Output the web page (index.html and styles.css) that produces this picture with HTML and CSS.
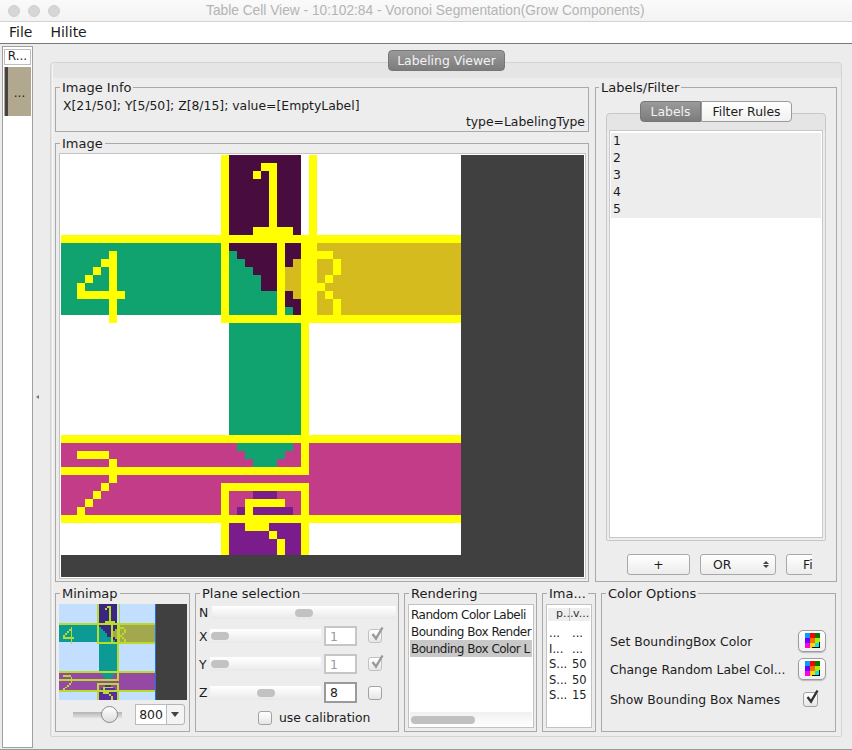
FILE: index.html
```html
<!DOCTYPE html>
<html lang="en">

<head>
  <meta charset="UTF-8">
  <title>Table Cell View</title>
  <link rel="stylesheet" href="styles.css">
</head>

<body>
  <svg class="defs" width="0" height="0">
    <symbol id="cells" viewBox="0 0 50 50" shape-rendering="crispEdges">
      <rect class="c-bg" width="50" height="50" />
      <g class="c-dark">
        <rect x="21" y="0" width="9" height="10" />
        <rect x="21" y="11" width="6" height="9" />
        <rect x="28" y="11" width="2" height="9" />
      </g>
      <g class="c-green">
        <rect x="0" y="11" width="20" height="9" />
        <rect x="21" y="21" width="9" height="14" />
        <rect x="21" y="12" width="1" height="1" />
        <rect x="21" y="13" width="2" height="1" />
        <rect x="21" y="14" width="3" height="1" />
        <rect x="21" y="15" width="4" height="2" />
        <rect x="21" y="17" width="6" height="3" />
        <rect x="28" y="19" width="1" height="1" />
      </g>
      <g class="c-gold">
        <rect x="32" y="11" width="18" height="9" />
        <rect x="29" y="13" width="1" height="1" />
        <rect x="28" y="14" width="2" height="3" />
        <rect x="29" y="17" width="1" height="1" />
      </g>
      <g class="c-pink">
        <rect x="0" y="36" width="50" height="9" />
      </g>
      <g class="c-green">
        <rect x="22" y="36" width="7" height="1" />
        <rect x="23" y="37" width="5" height="1" />
        <rect x="24" y="38" width="3" height="1" />
      </g>
      <g class="c-violet">
        <rect x="24" y="42" width="3" height="1" />
        <rect x="22" y="44" width="1" height="1" />
        <rect x="24" y="44" width="5" height="1" />
        <rect x="21" y="46" width="9" height="4" />
      </g>
      <g class="c-box">
        <rect x="0" y="10" width="50" height="1" />
        <rect x="20" y="20" width="30" height="1" />
        <rect x="0" y="35" width="50" height="1" />
        <rect x="0" y="39" width="31" height="1" />
        <rect x="20" y="41" width="11" height="1" />
        <rect x="0" y="45" width="50" height="1" />
        <rect x="20" y="0" width="1" height="21" />
        <rect x="20" y="41" width="1" height="9" />
        <rect x="30" y="10" width="1" height="30" />
        <rect x="30" y="41" width="1" height="9" />
        <rect x="31" y="0" width="1" height="21" />
        <rect x="27" y="10" width="1" height="11" />
        <!-- pixels of the region names -->
        <rect x="25" y="1" width="2" height="1" />
        <rect x="26" y="1" width="1" height="8" />
        <rect x="24" y="2" width="1" height="1" />
        <rect x="24" y="9" width="5" height="1" />
        <rect x="6" y="12" width="1" height="9" />
        <rect x="5" y="13" width="1" height="1" />
        <rect x="4" y="14" width="1" height="1" />
        <rect x="3" y="15" width="1" height="1" />
        <rect x="2" y="16" width="1" height="2" />
        <rect x="2" y="17" width="6" height="1" />
        <rect x="32" y="12" width="2" height="1" />
        <rect x="34" y="13" width="1" height="2" />
        <rect x="33" y="15" width="1" height="1" />
        <rect x="32" y="16" width="1" height="1" />
        <rect x="33" y="17" width="1" height="1" />
        <rect x="34" y="18" width="1" height="2" />
        <rect x="2" y="37" width="4" height="1" />
        <rect x="6" y="38" width="1" height="3" />
        <rect x="5" y="41" width="1" height="1" />
        <rect x="4" y="42" width="1" height="1" />
        <rect x="3" y="43" width="1" height="1" />
        <rect x="2" y="44" width="1" height="1" />
        <rect x="23" y="43" width="5" height="1" />
        <rect x="23" y="44" width="1" height="3" />
        <rect x="23" y="46" width="3" height="1" />
        <rect x="26" y="47" width="1" height="1" />
        <rect x="27" y="48" width="1" height="2" />
      </g>
    </symbol>
    <symbol id="tick" viewBox="0 0 16 16">
      <path d="M3.5 8 L7 12.5 L13.5 1.5" fill="none" stroke="currentColor" stroke-width="2.4" />
    </symbol>
    <symbol id="swatch" viewBox="0 0 15 15" shape-rendering="crispEdges">
      <rect x="0" y="0" width="5" height="5" fill="#0a9bff" />
      <rect x="5" y="0" width="5" height="5" fill="#f00" />
      <rect x="10" y="0" width="5" height="5" fill="#007a00" />
      <rect x="0" y="5" width="5" height="5" fill="#6a00ff" />
      <rect x="5" y="5" width="5" height="5" fill="#ff6a00" />
      <rect x="10" y="5" width="5" height="5" fill="#a8f000" />
      <rect x="0" y="10" width="5" height="5" fill="#ff00e0" />
      <rect x="5" y="10" width="5" height="5" fill="#ffd800" />
      <rect x="10" y="10" width="5" height="5" fill="#00e8f0" />
      <rect x="7" y="14" width="8" height="1" fill="#000" />
      <rect x="14" y="9" width="1" height="6" fill="#000" />
    </symbol>
  </svg>

  <div class="titlebar">
    <div class="lights"><i></i><i></i><i></i></div>
    <div class="title">Table Cell View - 10:102:84 - Voronoi Segmentation(Grow Components)</div>
  </div>
  <div class="menubar"><span>File</span><span>Hilite</span></div>

  <div class="main">
    <div class="side">
      <div class="side-head">R...</div>
      <div class="side-cell"><b></b><span>...</span></div>
    </div>
    <div class="splitter"><i></i></div>

    <div class="viewer">
      <div class="tabs"><div class="tab on">Labeling Viewer</div></div>
      <div class="pane">
        <div class="top-row">
          <div class="left-col">
            <fieldset class="info">
              <legend>Image Info</legend>
              <div>X[21/50]; Y[5/50]; Z[8/15]; value=[EmptyLabel]</div>
              <div class="type">type=LabelingType</div>
            </fieldset>
            <fieldset class="image">
              <legend>Image</legend>
              <div class="canvas-box">
                <div class="canvas">
                  <svg width="400" height="400"><use href="#cells" /></svg>
                </div>
              </div>
            </fieldset>
          </div>

          <fieldset class="labels">
            <legend>Labels/Filter</legend>
            <div class="tabs small">
              <div class="tab on">Labels</div>
              <div class="tab">Filter Rules</div>
            </div>
            <div class="pane inner">
              <div class="label-list">
                <div>1</div>
                <div>2</div>
                <div>3</div>
                <div>4</div>
                <div>5</div>
              </div>
            </div>
            <div class="filter-bar">
              <div class="btn add">+</div>
              <div class="btn or">OR<span class="updown"><i></i><i></i></span></div>
              <div class="btn fi">Fi</div>
            </div>
          </fieldset>
        </div>

        <div class="bottom-row">
          <fieldset class="minimap">
            <legend>Minimap</legend>
            <div class="mini-map">
              <svg width="96" height="96"><use href="#cells" /></svg>
            </div>
            <div class="zoom-row">
              <div class="zoom-slider"><i></i></div>
              <div class="combo"><span>800</span><b></b></div>
            </div>
          </fieldset>

          <fieldset class="plane">
            <legend>Plane selection</legend>
            <div class="plane-row n">
              <span class="axis">N</span>
              <div class="track"><i class="at-83"></i></div>
            </div>
            <div class="plane-row">
              <span class="axis">X</span>
              <div class="track"><i></i></div>
              <div class="field off">1</div>
              <div class="check off"><svg width="16" height="16"><use href="#tick" /></svg></div>
            </div>
            <div class="plane-row">
              <span class="axis">Y</span>
              <div class="track"><i></i></div>
              <div class="field off">1</div>
              <div class="check off"><svg width="16" height="16"><use href="#tick" /></svg></div>
            </div>
            <div class="plane-row">
              <span class="axis">Z</span>
              <div class="track"><i class="at-47"></i></div>
              <div class="field">8</div>
              <div class="check"></div>
            </div>
            <div class="calib"><div class="check"></div>use calibration</div>
          </fieldset>

          <fieldset class="rendering">
            <legend>Rendering</legend>
            <div class="render-list">
              <div class="item">Random Color Labeli</div>
              <div class="item">Bounding Box Render</div>
              <div class="item sel">Bounding Box Color L</div>
              <div class="hscroll"><i></i></div>
            </div>
          </fieldset>

          <fieldset class="meta">
            <legend>Ima...</legend>
            <div class="meta-table">
              <div class="meta-head"><span>p...</span><span>v...</span></div>
              <div class="meta-row"><span>...</span><span>...</span></div>
              <div class="meta-row"><span>I...</span><span>...</span></div>
              <div class="meta-row"><span>S...</span><span>50</span></div>
              <div class="meta-row"><span>S...</span><span>50</span></div>
              <div class="meta-row"><span>S...</span><span>15</span></div>
            </div>
          </fieldset>

          <fieldset class="colors">
            <legend>Color Options</legend>
            <div class="color-row">
              <span>Set BoundingBox Color</span>
              <div class="swatch-btn"><svg width="15" height="15"><use href="#swatch" /></svg></div>
            </div>
            <div class="color-row">
              <span>Change Random Label Col...</span>
              <div class="swatch-btn"><svg width="15" height="15"><use href="#swatch" /></svg></div>
            </div>
            <div class="color-row names">
              <span>Show Bounding Box Names</span>
              <div class="check big"><svg width="16" height="16"><use href="#tick" /></svg></div>
            </div>
          </fieldset>
        </div>
      </div>
    </div>
  </div>
</body>

</html>
```

FILE: styles.css
```css
* {
  box-sizing: border-box;
}

html,
body {
  margin: 0;
  height: 750px;
  overflow: hidden;
}

body {
  background: #ececec;
  color: #1c1c1c;
  font: 12.4px/16px "DejaVu Sans", sans-serif;
}

.defs {
  position: absolute;
}

/* window chrome */
.titlebar {
  display: flex;
  height: 22px;
  background: linear-gradient(#fafafa, #f3f3f3);
  border-bottom: 1px solid #d2d2d2;
}

.lights {
  display: flex;
  gap: 8px;
  padding: 5px 0 0 8px;
}

.lights i {
  width: 12px;
  height: 12px;
  border-radius: 50%;
  background: #d6d6d6;
  border: 1px solid #cfcfcf;
}

.title {
  margin-left: 146px;
  color: #b4b4b4;
  font: 13.75px/21px "Liberation Sans", sans-serif;
  white-space: nowrap;
}

.menubar {
  display: flex;
  gap: 18px;
  height: 22px;
  padding-left: 9px;
  background: #fff;
  border-bottom: 1px solid #787878;
  font-size: 14px;
  line-height: 21px;
}

.main {
  display: flex;
  height: 706px;
  border-bottom: 1px solid #9a9a9a;
}

.side {
  width: 31px;
  height: 702px;
  margin: 2px 0 0 2px;
  padding: 2px 1px;
  background: #fff;
  border: 1px solid #a0a0a0;
}

.side-head {
  height: 16px;
  border: 1px solid #bdbdbd;
  font-size: 12px;
  line-height: 13px;
  text-align: center;
}

.side-cell {
  display: flex;
  height: 49px;
  margin-top: 2px;
  padding-left: 1px;
  background: #b2a78f;
  font-size: 12px;
  line-height: 52px;
}

.side-cell b {
  width: 3px;
  background: #444;
}

.side-cell span {
  flex: 1;
  text-align: center;
}

.splitter {
  display: flex;
  align-items: center;
  width: 17px;
  padding: 0 0 0 3px;
}

.splitter i {
  width: 0;
  height: 0;
  margin-top: 1px;
  border: 2px solid transparent;
  border-left: 0;
  border-right: 3px solid #777;
}

.viewer {
  width: 792px;
  padding-top: 6px;
}

/* tabs */
.tabs {
  position: relative;
  z-index: 1;
  display: flex;
  justify-content: center;
  height: 21px;
  margin-bottom: -9px;
  margin-left: 1px;
}

.tab {
  width: 117px;
  height: 21px;
  background: linear-gradient(#fff, #f1f1f1);
  border: 1px solid #9b9b9b;
  border-radius: 0 4px 4px 0;
  text-align: center;
  line-height: 19px;
}

.tab.on {
  background: linear-gradient(#9a9a9a, #7c7c7c);
  border-color: #777;
  border-radius: 4px;
  color: #f2f2f2;
}

.tabs.small .tab {
  width: 91px;
}

.tabs.small .tab.on {
  width: 61px;
  border-radius: 4px 0 0 4px;
}

.tabs.small {
  margin: 7px 0 -9px;
}

.pane {
  height: 675px;
  padding: 17px 4px 0;
  background: linear-gradient(#e5e5e5 15px, #ededed 15px);
  border: 1px solid #d4d4d4;
  border-radius: 4px 4px 2px 2px;
  box-shadow: inset 1px 0 0 #e2e2e2, inset 2px 0 0 #f6f6f6;
}

.pane.inner {
  height: 428px;
  padding: 16px 2px 3px;
  background: linear-gradient(#e5e5e5 16px, #ededed 16px);
  border-color: #c8c8c8;
  box-shadow: none;
}

/* titled groups */
fieldset {
  min-width: 0;
  margin: 0;
  padding: 0 0 0 var(--pad);
  border: 1px solid #a9a9a9;
}

legend {
  height: 14px;
  margin-left: calc(4px - var(--pad));
  padding: 0 2px;
  font-size: 13px;
  line-height: 16px;
}

.top-row {
  display: flex;
  gap: 6px;
  height: 502px;
}

.left-col {
  display: flex;
  flex-direction: column;
  gap: 4px;
  width: 534px;
}

.info {
  --pad: 7px;
  height: 52px;
  padding-top: 4px;
  padding-right: 3px;
}

.type {
  text-align: right;
}

.image {
  --pad: 3px;
  height: 446px;
  padding-top: 3px;
}

.canvas-box {
  width: 527px;
  padding: 1px;
  background: #fff;
  border: 1px solid #c4c4c4;
}

.canvas {
  width: 523px;
  height: 422px;
  background: #404040;
}

.canvas svg,
.mini-map svg {
  display: block;
}

.canvas svg {
  --bg: #fff;
  --dark: #480c3e;
  --green: #10a36f;
  --gold: #d6bb1f;
  --pink: #c33c88;
  --violet: #7b1c8c;
  --box: #ff0;
}

.mini-map svg {
  --bg: #c2dfff;
  --dark: #38267f;
  --green: #0c9a94;
  --gold: #a3a84f;
  --pink: #9549a3;
  --violet: #5a2a9f;
  --box: #b9dc2c;
  box-shadow: 1px 0 0 #1e6fe0;
}

.c-bg { fill: var(--bg); }
.c-dark { fill: var(--dark); }
.c-green { fill: var(--green); }
.c-gold { fill: var(--gold); }
.c-pink { fill: var(--pink); }
.c-violet { fill: var(--violet); }
.c-box { fill: var(--box); }

.labels {
  --pad: 10px;
  width: 242px;
  padding-right: 10px;
}

.labels legend {
  margin-left: calc(3px - var(--pad));
}

.label-list {
  height: 408px;
  padding: 2px 1px;
  background: #fff;
  border: 1px solid #c8c8c8;
}

.label-list div {
  height: 17px;
  padding-left: 2px;
  background: #ededed;
}

.filter-bar {
  display: flex;
  gap: 10px;
  width: 185px;
  height: 21px;
  margin: 13px 0 0 21px;
  overflow: hidden;
}

.btn {
  display: flex;
  flex: none;
  align-items: center;
  justify-content: center;
  height: 21px;
  background: linear-gradient(#fff, #ececec);
  border: 1px solid #a8a8a8;
  border-radius: 3px;
}

.add {
  width: 63px;
}

.or {
  justify-content: space-between;
  width: 76px;
  padding: 0 6px 0 12px;
}

.updown i {
  display: block;
  width: 0;
  height: 0;
  margin: 1px 0;
  border: 3px solid transparent;
  border-top: 0;
  border-bottom: 3px solid #444;
}

.updown i + i {
  border-top: 3px solid #444;
  border-bottom: 0;
}

.fi {
  justify-content: flex-start;
  width: 60px;
  padding-left: 16px;
}

/* bottom row */
.bottom-row {
  display: flex;
  gap: 5px;
  height: 146px;
  margin-top: 4px;
}

.minimap {
  --pad: 3px;
  width: 135px;
  padding-top: 4px;
}

.mini-map {
  width: 128px;
  height: 96px;
  background: #404040;
}

.zoom-row {
  display: flex;
  align-items: center;
  height: 21px;
  margin-top: 4px;
}

.zoom-slider {
  display: flex;
  align-items: center;
  width: 49px;
  height: 17px;
  margin-left: 14px;
  background: linear-gradient(transparent 6px, #b4b4b4 6px, #e2e2e2 12px, transparent 12px);
  border-radius: 3px;
}

.zoom-slider i {
  width: 17px;
  height: 17px;
  margin-left: 28px;
  background: linear-gradient(#fff, #ddd);
  border: 1px solid #8a8a8a;
  border-radius: 50%;
}

.combo {
  display: flex;
  width: 50px;
  height: 21px;
  margin-left: 13px;
  background: #f4f4f4;
  border: 1px solid #b4b4b4;
  border-radius: 0 3px 3px 0;
}

.combo span {
  width: 32px;
  height: 21px;
  margin: -1px 0 0 -1px;
  background: #fff;
  border: 1px solid #bbb;
  text-align: center;
  line-height: 19px;
}

.combo b {
  width: 0;
  height: 0;
  margin: 7px 0 0 4px;
  border: 4px solid transparent;
  border-bottom: 0;
  border-top: 5px solid #444;
}

.plane {
  --pad: 3px;
  width: 204px;
  padding-top: 6px;
}

.plane-row {
  display: flex;
  align-items: center;
  height: 20px;
  margin-bottom: 8px;
}

.plane-row:nth-of-type(4) {
  height: 21px;
  margin-bottom: 8px;
}

.plane-row.n {
  height: 13px;
  margin-bottom: 7px;
}

.axis {
  flex: none;
  width: 11px;
  padding-top: 1px;
}

.n .axis {
  width: 13px;
}

.track {
  display: flex;
  align-items: center;
  width: 111px;
  height: 14px;
  background: linear-gradient(#fff, #f6f6f6 45%, #e8e8e8);
}

.n .track {
  width: 184px;
  height: 13px;
}

.track i {
  width: 18px;
  height: 8px;
  margin-left: 1px;
  background: #c2c2c2;
  border-radius: 4px;
}

.track i.at-83 {
  margin-left: 83px;
}

.track i.at-47 {
  margin-left: 47px;
}

.field {
  width: 33px;
  height: 100%;
  margin-left: 3px;
  padding-left: 4px;
  background: #fff;
  border: 2px solid #9a9a9a;
  line-height: 17px;
}

.field.off {
  border-color: #c6c6c6;
  color: #9a9a9a;
}

.check {
  position: relative;
  flex: none;
  width: 14px;
  height: 14px;
  margin-left: 11px;
  background: linear-gradient(#fff, #e6e6e6);
  border: 1px solid #a2a2a2;
  border-radius: 3px;
  color: #333;
}

.check svg {
  position: absolute;
  top: -4px;
  left: 0;
}

.check.off {
  border-color: #c2c2c2;
  color: #9a9a9a;
}

.calib {
  display: flex;
  align-items: center;
  gap: 7px;
  height: 14px;
  margin: 0 0 0 59px;
}

.calib .check {
  margin-left: 0;
}

.rendering {
  --pad: 3px;
  width: 133px;
  padding-top: 4px;
  padding-right: 2px;
}

.render-list {
  display: flex;
  flex-direction: column;
  height: 124px;
  padding: 1px 1px 0;
  background: #fff;
  border: 1px solid #c2c2c2;
}

.item {
  height: 17px;
  padding: 2px 0 0 1px;
  overflow: hidden;
  font-size: 12px;
  letter-spacing: -0.5px;
  line-height: 15px;
  white-space: nowrap;
}

.item.sel {
  background: #c8c8c8;
}

.hscroll {
  height: 15px;
  margin-top: auto;
  padding: 4px 1px;
  background: linear-gradient(#f0f0f0, #fff);
}

.hscroll i {
  display: block;
  width: 64px;
  height: 8px;
  background: #c0c0c0;
  border-radius: 4px;
}

.meta {
  --pad: 3px;
  width: 54px;
  padding-top: 4px;
  padding-right: 3px;
}

.meta-table {
  height: 124px;
  padding: 3px 1px;
  background: #fff;
  border: 1px solid #c2c2c2;
  font-size: 11.5px;
}

.meta-head {
  display: flex;
  height: 13px;
  margin-bottom: 4px;
  background: #eee;
  font-size: 11px;
  line-height: 12px;
  color: #333;
}

.meta-head span {
  flex: none;
  width: 22px;
  padding-left: 8px;
  border-right: 1px solid #bbb;
  white-space: nowrap;
}

.meta-head span + span {
  width: 18px;
  padding-left: 3px;
  border: 0;
}

.meta-row {
  display: flex;
  height: 15.6px;
  padding-left: 1px;
}

.meta-row span {
  flex: none;
  width: 23px;
}

.meta-row span + span {
  width: 16px;
}

.colors {
  --pad: 8px;
  width: 235px;
  padding-top: 30px;
  padding-right: 9px;
}

.color-row {
  display: flex;
  align-items: center;
  justify-content: space-between;
  height: 22px;
  margin-bottom: 6px;
}

.color-row > span {
  padding-top: 1px;
}

.color-row.names {
  margin-top: 8px;
}

.swatch-btn {
  display: flex;
  justify-content: center;
  width: 28px;
  height: 22px;
  padding-top: 2px;
  background: linear-gradient(#fff, #efefef);
  border: 1px solid #9c9c9c;
  border-radius: 5px;
  box-shadow: 0 1px 1px #bbb;
}

.check.big {
  width: 15px;
  height: 15px;
  margin-right: 8px;
}
```
